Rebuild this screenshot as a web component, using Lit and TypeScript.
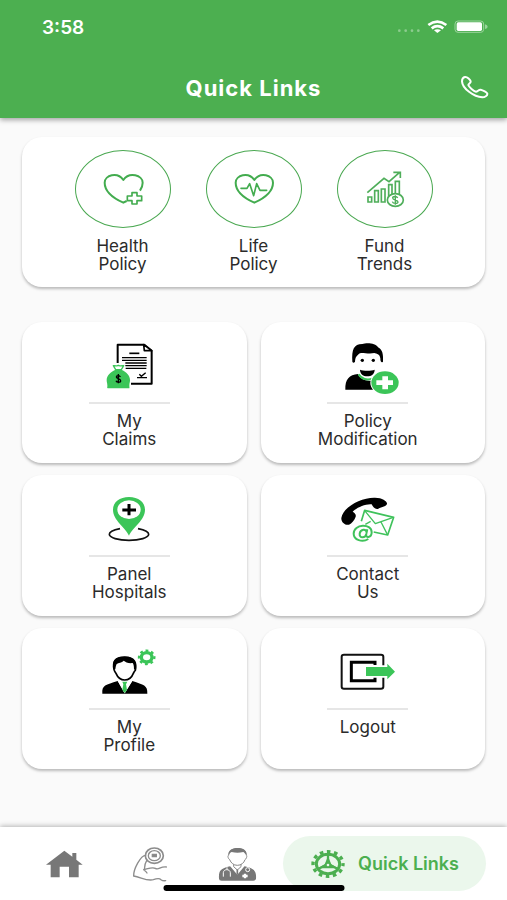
import { LitElement, html, svg, css, type SVGTemplateResult } from "lit";
import { customElement } from "lit/decorators.js";

interface Item {
  label: string;
  icon: SVGTemplateResult;
  box: string;
}

const policies: Item[] = [
  {
    label: "Health\nPolicy",
    box: "126 84 126 126",
    icon: svg`<g fill="none" stroke="#43ac4f" stroke-width="6" stroke-linejoin="round">
      <path d="M200 183L190 188C168 178 134 158 134 128C134 106 172 94 190 120C208 94 248 106 248 128C248 138 244 146 240 152" />
      <path stroke-width="5" d="M216 158h15v10h14v14h-14v10h-15v-10h-14v-14h14z" />
    </g>`,
  },
  {
    label: "Life\nPolicy",
    box: "518 84 126 126",
    icon: svg`<g fill="none" stroke="#43ac4f" stroke-width="6" stroke-linejoin="round" stroke-linecap="round">
      <path d="M582 188C560 178 526 158 526 128C526 106 564 94 582 120C600 94 638 106 638 128C638 158 604 178 582 188Z" />
      <path stroke-width="5" d="M542 145h18l8-14 12 36 9-36 10 20h20" />
    </g>`,
  },
  {
    label: "Fund\nTrends",
    box: "910 84 126 126",
    icon: svg`<g fill="none" stroke="#4fae5a" stroke-width="5">
      <path d="M920 158L970 115L985 125L1016 98M998 97h21v17" />
      <path d="M922 171h11v15h-11zM942 152h11v34h-11zM962 147h11v39h-11zM984 134h10v34h-10zM1004 124h12v44h-12z" />
      <ellipse cx="1004" cy="180" rx="24" ry="19" fill="#fff" />
      <path stroke-width="4" d="M1011 174c-2-6-15-6-15 0c0 7 16 5 16 12c0 6-15 6-17-1M1004 166v28" />
    </g>`,
  },
];

const tiles: Item[] = [
  {
    label: "My\nClaims",
    box: "28 18 180 150",
    icon: svg`
      <path d="M84 84V29h80l22 18v99h-62" fill="none" stroke="#000" stroke-width="6" stroke-linejoin="round" />
      <path d="M162 29l2 18h22z" fill="#fff" stroke="#000" stroke-width="5" stroke-linejoin="round" />
      <path d="M119 55h30" stroke="#000" stroke-width="5" />
      <path d="M97 68h74M97 76h74M107 84h64M107 92h64M108 100h62" stroke="#000" stroke-width="4" />
      <path d="M142 128h30M149 118l6 6 13-11" fill="none" stroke="#000" stroke-width="4" />
      <path d="M71 92c8-2 10 4 15-1c5 5 8-1 16 1l-7 12h-17z" fill="#fff" stroke="#3bc558" stroke-width="4" stroke-linejoin="round" />
      <path d="M76 105h21c12 6 24 16 24 30c0 8-2 8-2 18c0 6 2 7-2 7H56c-6 0-2-4-3-9c0-8-2-8-2-16c0-14 13-24 25-30z" fill="#3bc558" />
      <path d="M92 126c-2-6-12-5-12 0c0 6 13 4 13 11c0 6-12 6-14 0M86 117v28" fill="none" stroke="#000" stroke-width="4" />`,
  },
  {
    label: "Policy\nModification",
    box: "39 18 180 150",
    icon: svg`
      <path d="M61 164c-1-32 12-44 38-47c8 20 38 26 52 14c14 6 18 14 18 33z" fill="#000" />
      <path d="M82 80C80 44 86 27 112 27c12-4 40-4 47 10c14 8 16 20 15 43c-6 5-8-2-8-10c-2-14-12-14-18-16c-20 4-40-4-46 2c-8 8-11 10-12 24c-3 4-6 4-8 0z" fill="#000" />
      <circle cx="112" cy="76" r="5" /><circle cx="145" cy="76" r="5" />
      <path d="M105 104c10 4 34 4 44 0c0 13-10 20-22 20s-22-7-22-20z" fill="#000" />
      <path d="M101 118c8 15 26 18 42 13" fill="none" stroke="#3bc558" stroke-width="6" />
      <ellipse cx="180" cy="143" rx="44" ry="37" fill="#fff" />
      <ellipse cx="180" cy="143" rx="41" ry="34" fill="#3bc558" />
      <path d="M172 124h17v12h15v14h-15v13h-17v-13h-18v-14h18z" fill="#fff" />`,
  },
  {
    label: "Panel\nHospitals",
    box: "28 18 180 150",
    icon: svg`
      <path d="M91 122C70 126 59 132 59 139C59 149 86 157 118 157S177 149 177 139C177 132 166 126 145 122" fill="none" stroke="#111" stroke-width="5" />
      <path d="M118 143C108 118 70 98 70 65C70 42 90 27 118 27S166 42 166 65C166 98 128 118 118 143z" fill="#3bc558" />
      <ellipse cx="118" cy="65" rx="35" ry="28" fill="#fff" />
      <path d="M118 48v34M98 66h41" stroke="#000" stroke-width="9" />`,
  },
  {
    label: "Contact\nUs",
    box: "39 18 180 150",
    icon: svg`
      <g fill="none" stroke="#3fc25b" stroke-width="5" stroke-linejoin="round">
        <path d="M109 100L119 67L206 88L188 141L146 132" />
        <path d="M119 68L151 107L205 88M168 102L187 139M137 100L121 109" stroke-width="4" />
      </g>
      <path d="M49 90c6-34 58-60 98-61c24-1 38 10 39 17c1 8-16 12-26 16c-9 3-16-4-20-13c-20-2-46 11-57 22c6 4 11 8 9 15c-3 10-12 20-20 24c-10 3-24-6-23-20z" fill="#000" />
      <ellipse cx="113" cy="136" rx="32" ry="26" fill="#fff" />
      <path d="M130 153c-18 11-44 3-44-16c0-30 54-32 54-4c0 17-20 19-16 4l3-13M124 138c-3 14-22 13-20-1c2-14 21-16 21-3" fill="none" stroke="#3fc25b" stroke-width="6" />`,
  },
  {
    label: "My\nProfile",
    box: "28 21 180 150",
    icon: svg`
      <path d="M38 161c-2-26 10-26 46-38l21 37l23-37c34 12 46 12 45 38z" fill="#000" />
      <path d="M84 122l21 38l23-38z" fill="#fff" />
      <path d="M73 88c-4-20 0-37 32-37s36 20 32 40c-4 3-4 6-6 9c-5 13-14 20-26 20s-21-8-26-20c-2-4-5-6-6-12z" fill="#fff" stroke="#000" stroke-width="5" />
      <path d="M71 88C66 60 78 50 105 50s39 14 33 40l-5-2c0-12-2-16-4-19c-12 2-22-3-27-7c-6 7-16 6-21 10c-3 6-3 10-4 16z" fill="#000" />
      <path d="M98 125h15l-4 8l3 17l-7 9l-7-9l3-17z" fill="#3bc558" />
      <ellipse cx="171" cy="52" rx="16" ry="14" fill="none" stroke="#3bc558" stroke-width="10" />
      <ellipse cx="171" cy="52" rx="23" ry="20" fill="none" stroke="#3bc558" stroke-width="7" pathLength="80" stroke-dasharray="5 5" stroke-dashoffset="2" />`,
  },
  {
    label: "Logout",
    box: "39 21 180 150",
    icon: svg`
      <path d="M175 76V50q0-6-7-6H57q-7 0-7 6V140q0 6 7 6H168q7 0 7-6V113" fill="none" stroke="#111" stroke-width="6" />
      <path d="M150 75V67H79V122H150V113" fill="none" stroke="#000" stroke-width="9" />
      <path d="M123 81h64V71l23 24l-23 23v-10h-64z" fill="#3bc558" />`,
  },
];

const tabs: Item[] = [
  {
    label: "Home",
    box: "132 84 120 120",
    icon: svg`<path d="M138 146L193 104L217 122V111H229V131L248 146H236V184H207V152H179V184H152V146z" fill="#777" />`,
  },
  {
    label: "Fitness",
    box: "390 84 120 120",
    icon: svg`<g fill="none" stroke="#8c8c8c" stroke-width="4" stroke-linecap="round">
      <path d="M437 118C422 118 400 160 401 180C424 184 440 196 460 191C472 187 478 186 483 191Q488 195 497 194M440 134C432 146 434 158 433 163M431 161C444 158 458 152 466 157C476 163 480 151 499 153M433 163c3 2 5 3 8 8" />
      <ellipse cx="463" cy="119" rx="27" ry="23" stroke-width="5" />
      <ellipse cx="463" cy="119" rx="18" ry="15" />
      <path d="M457 115h12v7h-12z" fill="#888" />
    </g>`,
  },
  {
    label: "Doctors",
    box: "651 84 120 120",
    icon: svg`<path d="M657 188c-2-28 8-32 40-39l15 22l16-22c30 7 42 11 40 39q-1 6-8 6H665q-8 0-8-6z" fill="#777" />
      <path d="M690 150l22 26l22-26l-10-8h-24z" fill="#fff" />
      <path d="M701 144v8l11 10l11-10v-8" fill="none" stroke="#888" stroke-width="3" />
      <path d="M712 160v16" stroke="#777" stroke-width="5" />
      <path d="M686 118c-4 0-2 10 3 13c4 10 12 17 23 17s20-7 23-17c5-3 7-13 4-13c0-16-12-20-27-20s-26 6-26 20z" fill="#fff" stroke="#888" stroke-width="3" />
      <path d="M686 117c-2-14 10-21 27-21s28 7 26 21c-4-4-6-7-9-9q-18 4-35 0c-5 2-6 5-9 9z" fill="#777" />
      <path d="M670 182v-12c1-12 20-12 21 0v12M681 160v-6" fill="none" stroke="#fff" stroke-width="3" />
      <circle cx="743" cy="161" r="6" fill="none" stroke="#fff" stroke-width="3" />
      <path d="M735 173v14M727 180h16" stroke="#fff" stroke-width="7" />`,
  },
];

@customElement("app-root")
export class AppRoot extends LitElement {
  static styles = css`
    :host {
      display: flex;
      flex-direction: column;
      min-height: 100vh;
      background: #fafafa;
      color: #2b2b2b;
      font-family: Inter, Roboto, "Liberation Sans", sans-serif;
    }
    * {
      box-sizing: border-box;
    }
    svg {
      display: block;
      overflow: visible;
    }
    button {
      padding: 0;
      border: 0;
      background: none;
      color: inherit;
      font: inherit;
      cursor: pointer;
    }
    header {
      background: #4caf50;
      color: #fff;
      box-shadow: 0 2px 5px rgba(0, 0, 0, 0.35);
    }
    .status {
      display: flex;
      align-items: center;
      justify-content: space-between;
      height: 54px;
      padding: 0 19px 0 42px;
    }
    .time {
      font-size: 19px;
      font-weight: 600;
    }
    .bar {
      display: grid;
      grid-template-columns: 1fr auto 1fr;
      align-items: center;
      height: 64px;
      padding: 3px 18px 0;
    }
    h1 {
      grid-column: 2;
      margin: 0;
      font-size: 22px;
      font-weight: 700;
      letter-spacing: 1px;
    }
    .call {
      justify-self: end;
    }
    main {
      flex: 1;
      padding: 19px 22px 57px;
    }
    .card {
      background: #fff;
      border-radius: 20px;
      box-shadow: 0 2px 3px rgba(0, 0, 0, 0.26);
    }
    .policies {
      display: flex;
      justify-content: center;
      gap: 35px;
      height: 150px;
      padding-top: 13px;
    }
    .policy {
      display: flex;
      flex-direction: column;
      align-items: center;
      gap: 9px;
    }
    .ring {
      display: grid;
      place-items: center;
      width: 96px;
      height: 78px;
      border: 1px solid #4aa851;
      border-radius: 50%;
    }
    .label {
      font-size: 17px;
      line-height: 18px;
      text-align: center;
      white-space: pre-line;
    }
    .tiles {
      display: grid;
      grid-template-columns: 1fr 1fr;
      gap: 12px 14px;
      margin-top: 35px;
    }
    .tile {
      display: flex;
      flex-direction: column;
      align-items: center;
      height: 141px;
      padding: 19px 10px 0 0;
    }
    .rule {
      width: 81px;
      height: 2px;
      margin: 11px 0 8px;
      background: #e6e6e6;
    }
    nav {
      display: flex;
      align-items: flex-start;
      height: 73px;
      padding: 9px 21px 0;
      background: #fff;
      box-shadow: 0 -1px 5px rgba(0, 0, 0, 0.28);
      position: relative;
    }
    nav a {
      display: flex;
      align-items: center;
      justify-content: center;
      flex: 1;
      height: 55px;
      text-decoration: none;
    }
    nav .active {
      flex: 0 0 203px;
      gap: 12px;
      margin-left: 3px;
      border-radius: 28px;
      background: #ebf7ec;
      color: #4caf50;
      font-size: 18px;
      font-weight: 600;
    }
    .indicator {
      position: absolute;
      bottom: 9px;
      left: 50%;
      width: 181px;
      height: 6px;
      border-radius: 3px;
      background: #000;
      transform: translateX(-50%);
    }
  `;

  render() {
    return html`
      <header>
        <div class="status">
          <span class="time">3:58</span>
          <svg width="91" height="20" viewBox="1192 50 273 60" aria-hidden="true">
            <g fill="#8dcc8f">
              <circle cx="1199" cy="91" r="4" /><circle cx="1218" cy="91" r="4" />
              <circle cx="1237" cy="91" r="4" /><circle cx="1256" cy="91" r="4" />
            </g>
            <g fill="none" stroke="#fff" stroke-width="8">
              <path d="M1286 74q27-20 54 0" />
              <path d="M1296 84q17-13 35 0" />
            </g>
            <path d="M1303 90q10-7 21 0l-11 8z" fill="#fff" />
            <rect x="1366" y="62" width="86" height="34" rx="9" fill="none" stroke="#9bd39d" stroke-width="3" />
            <rect x="1371" y="66" width="76" height="26" rx="5" fill="#fff" />
            <path d="M1456 72q8 2 8 7t-8 7z" fill="#9bd39d" />
          </svg>
        </div>
        <div class="bar">
          <h1>Quick Links</h1>
          <button class="call" aria-label="Call">
            <svg width="29" height="28" viewBox="1379 223 87 84" fill="none" stroke="#fff" stroke-width="6" stroke-linejoin="round">
              <path d="M1394 232C1388 233 1385 239 1385 245C1386 266 1420 292 1446 293C1454 293 1461 288 1461 283C1462 278 1446 271 1441 270C1435 269 1432 276 1427 276C1420 275 1406 262 1404 256C1404 252 1412 250 1411 245C1410 241 1401 231 1394 232Z" />
            </svg>
          </button>
        </div>
      </header>
      <main>
        <section class="card policies">
          ${policies.map(
            (p) => html`<button class="policy">
              <span class="ring"><svg width="42" height="42" viewBox=${p.box} aria-hidden="true">${p.icon}</svg></span>
              <span class="label">${p.label}</span>
            </button>`
          )}
        </section>
        <section class="tiles">
          ${tiles.map(
            (t) => html`<button class="card tile">
              <svg width="60" height="50" viewBox=${t.box} aria-hidden="true">${t.icon}</svg>
              <span class="rule"></span>
              <span class="label">${t.label}</span>
            </button>`
          )}
        </section>
      </main>
      <nav>
        ${tabs.map(
          (t) => html`<a href="#" aria-label=${t.label}>
            <svg width="40" height="40" viewBox=${t.box} aria-hidden="true">${t.icon}</svg>
          </a>`
        )}
        <a class="active" href="#" aria-current="page">
          <svg width="36" height="30" viewBox="110 100 108 90" aria-hidden="true">
            <g fill="none" stroke="#4caf50">
              <ellipse cx="164" cy="145" rx="35" ry="29" stroke-width="9" />
              <ellipse cx="164" cy="145" rx="45" ry="37" stroke-width="10" pathLength="120" stroke-dasharray="5 5" stroke-dashoffset="2" />
              <path d="M164 145V118M164 145L134 160M164 145L194 160" stroke-width="7" />
            </g>
            <path d="M164 122l10 24l20 12h-60l20-12z" fill="#4caf50" />
            <circle cx="164" cy="148" r="4" fill="#ebf7ec" />
          </svg>
          Quick Links
        </a>
        <span class="indicator"></span>
      </nav>
    `;
  }
}
